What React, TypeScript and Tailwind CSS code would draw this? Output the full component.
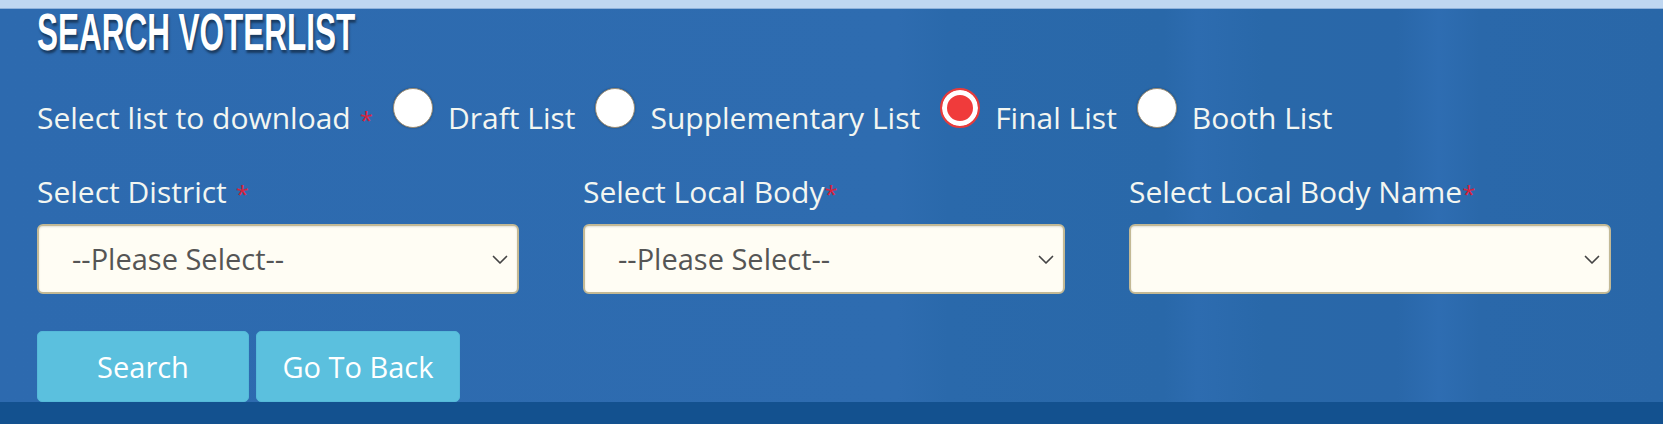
import { useState } from "react";

const LISTS = ["Draft List", "Supplementary List", "Final List", "Booth List"];

const FIELDS = [
  { label: "Select District", gap: true, placeholder: "--Please Select--" },
  { label: "Select Local Body", gap: false, placeholder: "--Please Select--" },
  { label: "Select Local Body Name", gap: false, placeholder: "" },
];

function Star({ gap }: { gap?: boolean }) {
  return <span className={`text-[24px] text-[#d8223c] ${gap ? "ml-[9px]" : ""}`}>*</span>;
}

function Chevron() {
  return (
    <svg
      className="absolute right-[11px] top-[31px] pointer-events-none"
      width="16"
      height="10"
      viewBox="0 0 16 10"
      fill="none"
    >
      <path d="M1.5 1.5l6.5 6.5 6.5-6.5" stroke="#444" strokeWidth="1.7" strokeLinecap="round" strokeLinejoin="round" />
    </svg>
  );
}

export default function App() {
  const [list, setList] = useState("Final List");

  return (
    <div className="w-[1663px] h-[424px] overflow-hidden flex flex-col bg-[#2c6aae] font-['Open_Sans','Noto_Sans',sans-serif] text-[30px] text-[#f3f6f1]">
      {/* top strip */}
      <div className="h-[9px] shrink-0 bg-[#bfd7f1] border-b border-[#8fb2db]" />

      <div className="h-[393px] shrink-0 px-[37px] bg-[linear-gradient(90deg,#2d6aaf_0%,#2e6cb0_54%,#2a69ab_57%,#2968a9_70%,#2d6cb0_72%,#2968a9_76%,#2967a9_84%,#2e6db2_86.5%,#2a68aa_89%,#2967a8_100%)]">
        {/* heading */}
        <h1 className="h-[46px] leading-[46px] font-['Liberation_Sans',Arial,sans-serif] font-bold text-[52px] text-white whitespace-nowrap">
          <span className="inline-block origin-left scale-x-[0.605] [text-shadow:2px_3px_3px_rgba(0,0,0,0.45)]">
            SEARCH VOTERLIST
          </span>
        </h1>

        {/* list type */}
        <div className="mt-[33px] h-[50px] flex items-start whitespace-nowrap">
          <span className="mt-[10px] leading-[40px]">
            Select list to download
            <Star gap />
          </span>
          {LISTS.map((name) => (
            <label key={name} className="flex items-start ml-[20px] cursor-pointer">
              <input
                type="radio"
                name="list"
                checked={list === name}
                onChange={() => setList(name)}
                className="appearance-none shrink-0 w-[40px] h-[40px] rounded-full bg-white border border-[#9a8c74] shadow-[0_0_2px_rgba(0,0,0,0.35)] checked:bg-[#f03b3b] checked:border-2 checked:border-[#e63b3b] checked:shadow-[inset_0_0_0_5px_#fff]"
              />
              <span className="ml-[15px] mt-[10px] leading-[40px]">{name}</span>
            </label>
          ))}
        </div>

        {/* dropdowns */}
        <div className="mt-[34px] w-[1574px] grid grid-cols-3 gap-x-[64px]">
          {FIELDS.map((f) => (
            <div key={f.label} className="flex flex-col">
              <span className="h-[40px] leading-[40px] whitespace-nowrap">
                {f.label}
                <Star gap={f.gap} />
              </span>
              <div className="relative mt-[12px] h-[70px]">
                <select className="block appearance-none w-full h-[70px] rounded-[6px] border-2 border-[#c3b995] bg-[#fffdf4] pl-[33px] text-[29px] text-[#555] outline-none shadow-[inset_0_1px_2px_rgba(0,0,0,0.12)]">
                  <option value="">{f.placeholder}</option>
                </select>
                <Chevron />
              </div>
            </div>
          ))}
        </div>

        {/* actions */}
        <div className="mt-[37px] flex gap-[7px]">
          <button className="w-[212px] h-[71px] rounded-[5px] bg-[#5bc0de] border border-[#55b9d9] text-white text-[29px]">
            Search
          </button>
          <button className="w-[204px] h-[71px] rounded-[5px] bg-[#5bc0de] border border-[#55b9d9] text-white text-[29px]">
            Go To Back
          </button>
        </div>
      </div>

      {/* bottom strip */}
      <div className="h-[22px] shrink-0 bg-[#13518f]" />
    </div>
  );
}
